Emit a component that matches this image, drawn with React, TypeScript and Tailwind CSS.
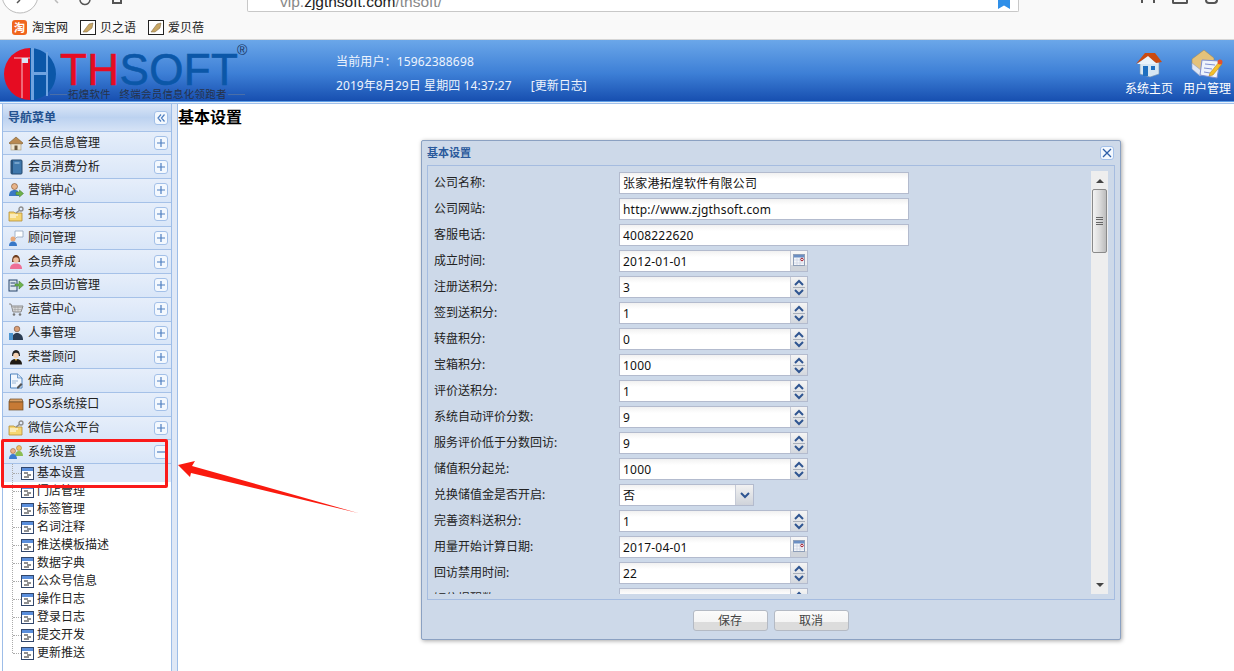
import type { ReactNode } from 'react';

const cjk = "font-['Noto_Sans','Noto_Sans_CJK_SC',sans-serif]";

type FieldKind = 'text' | 'date' | 'spin' | 'select';

interface Field {
  label: string;
  value: string;
  kind: FieldKind;
}

const fields: Field[] = [
  { label: '公司名称:', value: '张家港拓煌软件有限公司', kind: 'text' },
  { label: '公司网站:', value: 'http://www.zjgthsoft.com', kind: 'text' },
  { label: '客服电话:', value: '4008222620', kind: 'text' },
  { label: '成立时间:', value: '2012-01-01', kind: 'date' },
  { label: '注册送积分:', value: '3', kind: 'spin' },
  { label: '签到送积分:', value: '1', kind: 'spin' },
  { label: '转盘积分:', value: '0', kind: 'spin' },
  { label: '宝箱积分:', value: '1000', kind: 'spin' },
  { label: '评价送积分:', value: '1', kind: 'spin' },
  { label: '系统自动评价分数:', value: '9', kind: 'spin' },
  { label: '服务评价低于分数回访:', value: '9', kind: 'spin' },
  { label: '储值积分起兑:', value: '1000', kind: 'spin' },
  { label: '兑换储值金是否开启:', value: '否', kind: 'select' },
  { label: '完善资料送积分:', value: '1', kind: 'spin' },
  { label: '用量开始计算日期:', value: '2017-04-01', kind: 'date' },
  { label: '回访禁用时间:', value: '22', kind: 'spin' },
  { label: '短信提醒数:', value: '', kind: 'spin' },
];

function Svg({ children }: { children: ReactNode }) {
  return (
    <svg width="16" height="16" viewBox="0 0 16 16" className="shrink-0">
      {children}
    </svg>
  );
}

const menuIcons: Record<string, ReactNode> = {
  house: (
    <Svg>
      <path d="M1 8 8 2l7 6-1 1H2z" fill="#b98a50" stroke="#7d5a2c" strokeWidth=".6" />
      <rect x="3" y="9" width="10" height="6" fill="#efe6cf" stroke="#a89a78" strokeWidth=".6" />
      <rect x="6.500" y="10.500" width="3" height="4.500" fill="#6d5a3c" />
    </Svg>
  ),
  book: (
    <Svg>
      <rect x="3" y="1" width="11" height="14" rx="1" fill="#3f78ad" stroke="#24486e" />
      <rect x="3" y="1" width="2" height="14" fill="#27527c" />
      <path d="M6.500 4h5" stroke="#a9cbe8" />
    </Svg>
  ),
  personArrow: (
    <Svg>
      <circle cx="6.500" cy="4.500" r="3" fill="#e8b48a" stroke="#7a4a22" strokeWidth=".6" />
      <path d="M1 14c0-4 2-6 5.500-6S11 9 11 14z" fill="#3b78c4" />
      <path d="M8 10h3.500V8l4 3.500-4 3.500v-2H8z" fill="#6eb04a" stroke="#3f7d2a" strokeWidth=".5" />
    </Svg>
  ),
  folderKey: (
    <Svg>
      <path d="M1 6h5l1 1h7v8H1z" fill="#f6d672" stroke="#b48e35" strokeWidth=".8" />
      <path d="M2 9h8M2 11h6" stroke="#fff" />
      <path d="m8 7 4-3" stroke="#8c8c8c" strokeWidth="1.500" />
      <circle cx="13" cy="3" r="2" fill="none" stroke="#8c8c8c" strokeWidth="1.300" />
    </Svg>
  ),
  personChat: (
    <Svg>
      <path d="M7 1h8v6H9l-2 2z" fill="#fff" stroke="#8fa3bd" strokeWidth=".8" />
      <circle cx="5" cy="9" r="2.500" fill="#e8a878" />
      <path d="M1 16c0-3 1.500-4.500 4-4.500S9 13 9 16z" fill="#3878c8" />
    </Svg>
  ),
  woman: (
    <Svg>
      <path d="M4 8c0-5 1.500-7 4-7s4 2 4 7z" fill="#6e3f22" />
      <circle cx="8" cy="6" r="2.800" fill="#f0bf9c" />
      <path d="M2 15c0-4 2.500-5.500 6-5.500s6 1.500 6 5.500z" fill="#ee6f96" />
    </Svg>
  ),
  transfer: (
    <Svg>
      <rect x="1" y="3" width="8" height="11" fill="#dfe7ef" stroke="#27446b" />
      <path d="M2.500 6h5M2.500 9h5" stroke="#27446b" />
      <path d="M7 7h4V4l4.500 4-4.500 4V9H7z" fill="#6fb24c" stroke="#3c7a2a" strokeWidth=".5" />
    </Svg>
  ),
  cart: (
    <Svg>
      <path d="M1 3h2l2 8h8l2-6H4" fill="#d9d9d9" stroke="#8c8c8c" />
      <path d="M5 6.500h9M5.500 8.500h8M7 5v6M10 5v6" stroke="#a0a0a0" strokeWidth=".6" />
      <circle cx="6" cy="13.500" r="1.300" fill="#777" />
      <circle cx="12" cy="13.500" r="1.300" fill="#777" />
    </Svg>
  ),
  staff: (
    <Svg>
      <circle cx="9" cy="4" r="2.800" fill="#d99e76" stroke="#5b3318" strokeWidth=".5" />
      <path d="M4 15c0-5 2-7 5-7s6 2 6 7z" fill="#2a3c54" />
      <rect x="1" y="8" width="4" height="7" fill="#4d95d0" />
    </Svg>
  ),
  honor: (
    <Svg>
      <path d="M4 7c0-4 1.500-6 4-6s4 2 4 6z" fill="#222" />
      <circle cx="8" cy="6.500" r="2.800" fill="#f3d2b4" />
      <path d="M2 15.500c0-4 2.500-5.500 6-5.500s6 1.500 6 5.500z" fill="#1f1a14" />
      <path d="m6.500 10 1.500 2 1.500-2z" fill="#e0b040" />
    </Svg>
  ),
  doc: (
    <Svg>
      <path d="M2.500 1h7L14 5v10H2.500z" fill="#f2f7fd" stroke="#4f83bd" />
      <path d="M9.500 1v4H14" fill="#cfe0f2" stroke="#4f83bd" strokeWidth=".7" />
      <path d="M4 8h6M4 10h4" stroke="#9bb7d6" />
      <path d="m9 14 4-4 1.500 1.500-4 4H9z" fill="#555" />
    </Svg>
  ),
  box: (
    <Svg>
      <path d="M2 3h12l1 3H1z" fill="#d9a066" stroke="#6e4a24" strokeWidth=".7" />
      <rect x="1" y="6" width="14" height="8" fill="#c77a35" stroke="#6e4a24" strokeWidth=".7" />
    </Svg>
  ),
  team: (
    <Svg>
      <circle cx="11" cy="4" r="2.500" fill="#f0c068" stroke="#9a6f25" strokeWidth=".5" />
      <path d="M7 12c0-3 1.500-5 4-5s4 2 4 5z" fill="#8cbd52" />
      <circle cx="5" cy="7" r="2.500" fill="#eeb48a" stroke="#8a4e22" strokeWidth=".5" />
      <path d="M1 15c0-3 1.500-5 4-5s4 2 4 5z" fill="#3c7bd0" />
    </Svg>
  ),
};

const menuItems = [
  { label: '会员信息管理', icon: 'house' },
  { label: '会员消费分析', icon: 'book' },
  { label: '营销中心', icon: 'personArrow' },
  { label: '指标考核', icon: 'folderKey' },
  { label: '顾问管理', icon: 'personChat' },
  { label: '会员养成', icon: 'woman' },
  { label: '会员回访管理', icon: 'transfer' },
  { label: '运营中心', icon: 'cart' },
  { label: '人事管理', icon: 'staff' },
  { label: '荣誉顾问', icon: 'honor' },
  { label: '供应商', icon: 'doc' },
  { label: 'POS系统接口', icon: 'box' },
  { label: '微信公众平台', icon: 'folderKey' },
  { label: '系统设置', icon: 'team' },
];

const treeItems = [
  '基本设置',
  '门店管理',
  '标签管理',
  '名词注释',
  '推送模板描述',
  '数据字典',
  '公众号信息',
  '操作日志',
  '登录日志',
  '提交开发',
  '更新推送',
];

function ToolButton({ children }: { children: ReactNode }) {
  return (
    <span className="flex h-[14px] w-[14px] shrink-0 items-center justify-center rounded-[3px] border border-[#a3c0e8] bg-[#f3f8fe]">
      <svg width="10" height="10" viewBox="0 0 10 10" fill="none" stroke="#4f7fc0" strokeWidth="1.200">
        {children}
      </svg>
    </span>
  );
}

function PageIcon() {
  return (
    <svg width="13" height="13" viewBox="0 0 13 13" className="shrink-0">
      <rect x=".5" y=".5" width="12" height="12" fill="#fff" stroke="#31466b" />
      <rect x="1" y="1" width="11" height="3" fill="#5b8fdc" />
      <path d="M3 6h4M6 8h4M3 10h5" stroke="#222" />
    </svg>
  );
}

function MenuRow({ label, icon, open }: { label: string; icon: string; open?: boolean }) {
  return (
    <div className="flex h-[23.77px] items-center border-b border-[#a5c1e8] bg-[linear-gradient(#e6eefa,#d9e6f8)] pl-[5px] pr-[3px] text-[#222]">
      <span className="flex w-[20px] shrink-0">{menuIcons[icon]}</span>
      <span className="flex-1 whitespace-nowrap">{label}</span>
      <ToolButton>{open ? <path d="M1 5h8" /> : <path d="M1 5h8M5 1v8" />}</ToolButton>
    </div>
  );
}

function Sidebar() {
  return (
    <aside className="flex w-[170px] shrink-0 flex-col overflow-hidden border-x border-[#9dbde8] bg-white text-[12px] leading-none">
      <div className="flex h-[27.5px] shrink-0 items-center justify-between border-b border-[#a5c1e8] bg-[linear-gradient(#dbe6f7,#bcd2f0_50%,#d6e3f6)] pl-[5px] pr-[3px] pt-[2px] font-bold text-[#23518f]">
        <span>导航菜单</span>
        <ToolButton>
          <path d="M5 1.500 2 5l3 3.500M8.500 1.500 5.500 5l3 3.500" />
        </ToolButton>
      </div>
      {menuItems.map((item, i) => (
        <MenuRow key={item.label} label={item.label} icon={item.icon} open={i === 13} />
      ))}
      <div className="relative">
        <div className="absolute bottom-[9px] left-[9px] top-0 w-0 border-l border-dotted border-[#aaa]" />
        {treeItems.map((name, i) => (
          <div key={name} className={`flex h-[18px] items-center ${i === 0 ? 'bg-[#dce7f8]' : ''}`}>
            <span className="ml-[10px] w-[8px] border-t border-dotted border-[#aaa]" />
            <PageIcon />
            <span className="ml-[3px] whitespace-nowrap text-[#222]">{name}</span>
          </div>
        ))}
      </div>
    </aside>
  );
}

function SpinButton() {
  return (
    <span className="flex h-full w-[16px] flex-col items-center justify-center gap-[1px] bg-[linear-gradient(#f4f4f4,#d4d8de)]">
      <svg width="10" height="8" viewBox="0 0 10 8" fill="none" stroke="#2f5591" strokeWidth="2">
        <path d="m1 7 4-4 4 4" />
      </svg>
      <span className="h-px w-[12px] bg-[#aab0ba]" />
      <svg width="10" height="8" viewBox="0 0 10 8" fill="none" stroke="#2f5591" strokeWidth="2">
        <path d="m1 1 4 4 4-4" />
      </svg>
    </span>
  );
}

function DateButton() {
  return (
    <span className="flex h-full w-[16px] items-start justify-center bg-[linear-gradient(#f6f6f6,#f0f0f0_70%,#d0d4da_70%)] pt-[3px]">
      <svg width="12" height="12" viewBox="0 0 12 12">
        <rect x=".5" y=".5" width="11" height="11" fill="#f4f6fa" stroke="#8f9fb8" />
        <rect x="1" y="1" width="10" height="2.500" fill="#6b8fc4" />
        <path d="M1 6h6M1 9h10M4 4v7M7 4v7" stroke="#c5cfdf" strokeWidth=".6" />
        <circle cx="9" cy="5.500" r="1.300" fill="#fff" stroke="#a0182a" />
      </svg>
    </span>
  );
}

function SelectButton() {
  return (
    <span className="flex h-full w-[17px] items-center justify-center bg-[linear-gradient(#f2f2f2,#cfd3da)]">
      <svg width="10" height="7" viewBox="0 0 10 7" fill="none" stroke="#2f5591" strokeWidth="2">
        <path d="m1 1 4 4 4-4" />
      </svg>
    </span>
  );
}

function FormField({ field }: { field: Field }) {
  const width = field.kind === 'text' ? 'w-[290px]' : field.kind === 'select' ? 'w-[135px]' : 'w-[189px]';
  return (
    <div className="flex h-[22px] shrink-0 items-center">
      <label className="w-[191px] shrink-0 whitespace-nowrap pl-[6px] text-[12px] text-[#222]">{field.label}</label>
      <div className={`flex h-[22px] items-stretch border border-[#b3bbce] ${width}`}>
        <span className="flex-1 whitespace-nowrap bg-[linear-gradient(#f1f1f1,#fff_30%)] pl-[3px] text-[12px] leading-[21px] tracking-[0.2px] text-[#111]">
          {field.value}
        </span>
        {field.kind !== 'text' && <span className="w-px bg-[#c5cad6]" />}
        {field.kind === 'date' && <DateButton />}
        {field.kind === 'spin' && <SpinButton />}
        {field.kind === 'select' && <SelectButton />}
      </div>
    </div>
  );
}

function Scrollbar() {
  return (
    <div className="flex h-[423px] w-[17px] shrink-0 flex-col items-center bg-[#eeeeee]">
      <span className="mt-[8px] h-0 w-0 border-x-[4px] border-b-[4px] border-x-transparent border-b-[#444]" />
      <div className="mt-[6px] flex h-[64px] w-[15px] flex-col items-center justify-center gap-[1.500px] rounded-[2px] border border-[#8a8a8a] bg-[linear-gradient(90deg,#f3f3f3,#dcdcdc_50%,#bcbcbc)]">
        <span className="h-px w-[7px] bg-[#666]" />
        <span className="h-px w-[7px] bg-[#666]" />
        <span className="h-px w-[7px] bg-[#666]" />
        <span className="h-px w-[7px] bg-[#666]" />
      </div>
      <span className="mb-[7px] mt-auto h-0 w-0 border-x-[4px] border-t-[4px] border-x-transparent border-t-[#444]" />
    </div>
  );
}

function DialogButton({ children }: { children: ReactNode }) {
  return (
    <button className="h-[21px] w-[75px] rounded-[3px] border border-[#b4bac4] bg-[linear-gradient(#fbfbfb,#f4f4f4_60%,#dcdcdc_60%,#dcdcdc)] text-[12px] leading-none text-[#444]">
      {children}
    </button>
  );
}

function Dialog() {
  return (
    <div className="ml-[243px] mt-[12px] h-[500px] w-[700px] rounded-[2px] border border-[#8ba1c2] bg-[#cdd9e9] shadow-[1px_1px_4px_rgba(0,0,0,0.35)]">
      <div className="flex h-[24px] items-center justify-between pl-[5px] pr-[6px]">
        <span className="text-[11px] font-bold text-[#2a5a9c]">基本设置</span>
        <span className="flex h-[14px] w-[14px] items-center justify-center rounded-[3px] border border-[#a3c0e8] bg-[#f3f8fe]">
          <svg width="10" height="10" viewBox="0 0 10 10" fill="none" stroke="#2d5fa8" strokeWidth="1.300">
            <path d="m1 1 8 8M9 1 1 9" />
          </svg>
        </span>
      </div>
      <div className="mx-[5px] flex h-[435px] justify-between border border-[#a5bce0] pt-[5px]">
        <div className="mt-[1px] flex h-[422px] flex-col gap-[4px] overflow-hidden">
          {fields.map((field) => (
            <FormField key={field.label} field={field} />
          ))}
        </div>
        <div className="mr-[6px]">
          <Scrollbar />
        </div>
      </div>
      <div className="mt-[10px] flex justify-center gap-[6px] pr-[1px]">
        <DialogButton>保存</DialogButton>
        <DialogButton>取消</DialogButton>
      </div>
    </div>
  );
}

function Logo() {
  return (
    <div className="relative h-[61px] w-[336px] shrink-0">
      <svg width="54" height="54" viewBox="0 0 54 54" className="absolute left-[2px] top-[7px]">
        <path d="M28 1a26 26 0 0 0 0 52z" fill="#e60c22" />
        <path d="M28 1a26 26 0 0 1 0 52z" fill="#0b57a8" />
        <path d="M12 11h16M20 11v40" stroke="#f6c5cc" strokeWidth="1" fill="none" />
        <rect x="20" y="11" width="6" height="5" fill="#d9e6f6" />
        <rect x="29" y="1" width="3" height="52" fill="#6fa3e0" />
        <rect x="32" y="25" width="12" height="3" fill="#6fa3e0" />
        <rect x="44" y="5" width="2" height="44" fill="#6fa3e0" />
      </svg>
      <span className="absolute left-[60px] top-[12px] flex whitespace-nowrap font-['Liberation_Sans',sans-serif] text-[44px] leading-[36px] tracking-[0.4px] [-webkit-text-stroke:0.6px_currentColor]">
        <span className="text-[#e60c22]">TH</span>
        <span className="text-[#0b57a8]">SOFT</span>
      </span>
      <span className="absolute left-[237px] top-[3px] font-['Liberation_Sans',sans-serif] text-[14px] leading-none text-[#17345e]">®</span>
      <div className="absolute left-[50px] top-[48px] flex w-[200px] items-center gap-[1px] text-[10.500px] leading-[13px] tracking-[0.2px] text-[#26324a]">
        <span className="h-px w-[17px] bg-[#4a6ea8]" />
        <span className="whitespace-pre">拓煌软件   终端会员信息化领跑者</span>
        <span className="h-px w-[17px] bg-[#4a6ea8]" />
      </div>
    </div>
  );
}

function Header() {
  return (
    <header className="flex h-[61px] items-stretch bg-[linear-gradient(#6ba7e9,#3d7fd6_55%,#174fb0)] text-[12px]">
      <Logo />
      <div className="flex flex-col gap-[10px] pt-[15px] leading-[14px] text-[#eef4fd]">
        <span className="tracking-[0.15px]">当前用户：15962388698</span>
        <span className="flex gap-[19px]">
          <span className="tracking-[0.08px]">2019年8月29日 星期四 14:37:27</span>
          <span>[更新日志]</span>
        </span>
      </div>
      <div className="ml-auto flex gap-[10px] pr-[3px] pt-[9px] text-white">
        <div className="flex w-[48px] flex-col items-center">
          <svg width="30" height="30" viewBox="0 0 30 30">
            <path d="M6 13h19v12l-9 3-10-3z" fill="#d6e6f2" stroke="#7d97ad" strokeWidth=".6" />
            <path d="M2 15 11 4h10l7 9-6 1-8-6z" fill="#cb4a10" />
            <path d="m3 15 11-8 9 8" fill="#eaf3fa" />
            <rect x="9" y="17" width="5" height="10" fill="#1e6fc0" />
            <rect x="17" y="17" width="4" height="4" fill="#1e6fc0" />
          </svg>
          <span className="mt-[3px] leading-[14px]">系统主页</span>
        </div>
        <div className="flex w-[48px] flex-col items-center">
          <svg width="34" height="30" viewBox="0 0 34 30">
            <path d="M2 10 14 1l10 8v12L10 24 2 16z" fill="#e4c27a" stroke="#a08a5a" strokeWidth=".6" />
            <path d="M2 14 12 22l12-8v4L10 27 2 20z" fill="#dfe7f5" stroke="#8d9cc0" strokeWidth=".6" />
            <path d="m12 11 18 1-3 17-17-3z" fill="#eef3fc" stroke="#7e8ed0" />
            <path d="m15 15 10 1M14 19l8 1M14 23l6 1" stroke="#7e8ed0" />
            <path d="m20 24 9-11 3 2-9 11-4 1z" fill="#f3c02c" stroke="#b07a10" strokeWidth=".5" />
            <circle cx="30" cy="13" r="2.500" fill="#e4522c" />
          </svg>
          <span className="mt-[3px] leading-[14px]">用户管理</span>
        </div>
      </div>
    </header>
  );
}

function BrowserChrome() {
  return (
    <div className="h-[40px] border-b border-[#d6d6d6] bg-[#f9f9f9] text-[12px] leading-none">
      <div className="flex h-[17px] overflow-hidden">
        <svg width="130" height="17" viewBox="0 0 130 17" fill="none" stroke="#555" className="shrink-0">
          <circle cx="20" cy="-5" r="18" fill="#fff" stroke="#bbb" />
          <path d="m20 0 -3 3" strokeWidth="1.500" />
          <path d="m55 0 3 3" stroke="#bbb" strokeWidth="1.500" />
          <path d="M80 -1a5 5 0 0 0 10 1" strokeWidth="1.500" />
          <rect x="113" y="-4" width="8" height="7" strokeWidth="2" />
        </svg>
        <div className="ml-[117px] flex h-[12px] w-[772px] items-end overflow-hidden rounded-b-[2px] border-x border-b border-[#c8c8c8] bg-white">
          <span className="mb-[1px] ml-[32px] whitespace-nowrap font-['Liberation_Sans',sans-serif] text-[15.500px] leading-[16px] text-[#888]">
            vip.<span className="text-[#222]">zjgthsoft.com</span>/thsoft/
          </span>
          <span className="ml-auto mr-[8px] h-[9px] w-[12px] self-start bg-[#2f8fe8] [clip-path:polygon(0_0,100%_0,100%_100%,50%_60%,0_100%)]" />
        </div>
        <div className="ml-auto flex items-start gap-[17px] pr-[16px]">
          <span className="h-[3px] w-[14px] border-x-2 border-[#555]" />
          <span className="h-[4px] w-[16px] rounded-b-[2px] border-x-2 border-b-2 border-[#555]" />
          <span className="h-[4px] w-[13px] rounded-b-full border-x-2 border-b-2 border-[#555]" />
        </div>
      </div>
      <div className="flex h-[21px] items-center gap-[12px] pl-[12px]">
        <span className="flex items-center gap-[5px]">
          <span className="flex h-[15px] w-[15px] items-center justify-center rounded-[3px] bg-[#f0651d] text-[11px] font-bold text-white">淘</span>
          <span className="text-[#222]">淘宝网</span>
        </span>
        {['贝之语', '爱贝蓓'].map((name) => (
          <span key={name} className="flex items-center gap-[4px]">
            <span className="flex h-[15px] w-[16px] items-center justify-center border border-[#222] bg-white">
              <svg width="12" height="11" viewBox="0 0 12 11">
                <path d="M1 10 4 6l3-4 4-1-1 5-5 4z" fill="#c9a765" stroke="#77603a" strokeWidth=".5" />
              </svg>
            </span>
            <span className="text-[#222]">{name}</span>
          </span>
        ))}
      </div>
    </div>
  );
}

export default function App() {
  return (
    <div className={`relative h-[671px] w-[1234px] overflow-hidden bg-white ${cjk}`}>
      <BrowserChrome />
      <Header />
      <div className="h-px bg-[#5e9ee6]" />
      <div className="h-px bg-[#e8f0fb]" />
      <div className="h-px bg-[#9fc0ea]" />
      <div className="flex h-[567px] pl-[2px]">
        <Sidebar />
        <div className="w-[6px] shrink-0 border-r border-[#9dbde8] bg-[#dfe8f6]" />
        <main className="flex-1">
          <h1 className="pt-[2px] text-[16px] font-bold leading-[22px] text-black">基本设置</h1>
          <Dialog />
        </main>
      </div>
      {/* annotation drawn over the screenshot */}
      <div className="absolute left-[1px] top-[439px] h-[49px] w-[167px] rounded-[2px] border-[3px] border-[#fa1a1a]" />
      <svg width="190" height="60" viewBox="0 0 190 60" className="absolute left-[175px] top-[456px]">
        <path d="M3 9 20 5l-3 5 166 47L16 17l-1 4z" fill="#fa1a0f" />
      </svg>
    </div>
  );
}
